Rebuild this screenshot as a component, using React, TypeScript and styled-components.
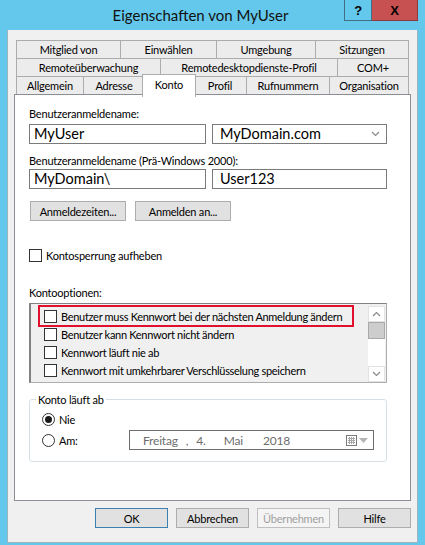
import { createGlobalStyle, styled } from 'styled-components';

const GlobalStyle = createGlobalStyle`
  html, body {
    margin: 0;
    padding: 0;
    background: #ffffff;
  }
  body {
    font-family: Lato, 'Liberation Sans', sans-serif;
    font-size: 11px;
    letter-spacing: -0.2px;
    color: #000000;
  }
`;

/* Fensterrahmen */
const Window = styled.div`
  width: 425px;
  height: 545px;
  box-sizing: border-box;
  padding: 0 7px 2px 7px;
  background: #63c8ec;
  display: flex;
  flex-direction: column;
`;

const TitleBar = styled.div`
  height: 30px;
  display: flex;
  align-items: flex-start;
  flex-shrink: 0;
`;

const Title = styled.div`
  flex: 1;
  padding-left: 50px;
  text-align: center;
  line-height: 30px;
  font-size: 15px;
  letter-spacing: 0;
  color: #111;
`;

const CaptionButton = styled.div<{ $close?: boolean }>`
  width: ${(p) => (p.$close ? '46px' : '28px')};
  height: 21px;
  box-sizing: border-box;
  display: flex;
  align-items: center;
  justify-content: center;
  font-family: 'Liberation Sans', sans-serif;
  font-weight: bold;
  font-size: 13px;
  background: ${(p) => (p.$close ? '#c75050' : 'transparent')};
  border: 1px solid ${(p) => (p.$close ? '#8f3a3a' : '#3f6f82')};
  border-top: none;
  border-left: ${(p) => (p.$close ? 'none' : '1px solid #3f6f82')};
`;

const Client = styled.div`
  flex: 1;
  background: #f0f0f0;
  border: 1px solid #9fb3bf;
  border-top: none;
  padding: 10px 6px 0 6px;
  display: flex;
  flex-direction: column;
`;

/* Registerkarten */
const TabStrip = styled.div`
  margin: 0 2px;
  display: flex;
  flex-direction: column;
`;

const TabRow = styled.div`
  display: flex;
  align-items: flex-end;
  height: 19px;

  & + & {
    margin-top: -1px;
  }
`;

const Tab = styled.div<{ $w: number; $active?: boolean }>`
  flex-shrink: 0;
  width: ${(p) => p.$w}px;
  height: ${(p) => (p.$active ? 23 : 19)}px;
  box-sizing: border-box;
  border: 1px solid #acacac;
  background: ${(p) => (p.$active ? '#ffffff' : '#ececec')};
  display: flex;
  align-items: ${(p) => (p.$active ? 'flex-start' : 'center')};
  justify-content: center;
  padding-top: ${(p) => (p.$active ? '2px' : '0')};
  line-height: 15px;
  white-space: nowrap;
  position: relative;

  & + & {
    margin-left: -1px;
  }

  ${(p) =>
    p.$active &&
    `
    z-index: 2;
    margin-left: -3px !important;
    margin-right: -2px;
    margin-bottom: -2px;
    border-bottom: none;
  `}
`;

const Panel = styled.div`
  margin-top: -1px;
  height: 407px;
  box-sizing: border-box;
  background: #ffffff;
  border: 1px solid #8b8e95;
  padding: 0 23px 0 14px;
  display: flex;
  flex-direction: column;
  position: relative;
  z-index: 1;
`;

const Label = styled.div<{ $gap: number }>`
  margin-top: ${(p) => p.$gap}px;
  line-height: 15px;
`;

const FieldRow = styled.div<{ $gap: number }>`
  margin-top: ${(p) => p.$gap}px;
  display: flex;
  gap: 6px;
`;

const TextBox = styled.div<{ $w: number; $pad?: number }>`
  width: ${(p) => p.$w}px;
  height: 20px;
  box-sizing: border-box;
  border: 1px solid #7a7a7a;
  background: #ffffff;
  padding-left: ${(p) => p.$pad ?? 4}px;
  font-size: 14.5px;
  letter-spacing: 0;
  line-height: 18px;
  display: flex;
  align-items: center;
  justify-content: space-between;
  padding-right: 6px;
`;

const ButtonRow = styled.div<{ $gap: number }>`
  margin-top: ${(p) => p.$gap}px;
  display: flex;
  gap: 9px;
  padding-left: 1px;
`;

const Button = styled.div<{ $w: number; $default?: boolean; $disabled?: boolean }>`
  width: ${(p) => p.$w}px;
  height: 20px;
  box-sizing: border-box;
  border: 1px solid
    ${(p) => (p.$default ? '#3c7fb1' : p.$disabled ? '#bfbfbf' : '#adadad')};
  background: ${(p) => (p.$disabled ? '#f4f4f4' : '#e1e1e1')};
  color: ${(p) => (p.$disabled ? '#a0a0a0' : '#000000')};
  display: flex;
  align-items: center;
  justify-content: center;
  line-height: 15px;
`;

const CheckRow = styled.div<{ $gap?: number }>`
  margin-top: ${(p) => p.$gap ?? 0}px;
  display: flex;
  align-items: center;
  gap: 4px;
  line-height: 15px;
  white-space: nowrap;
`;

const Box = styled.span`
  width: 13px;
  height: 13px;
  box-sizing: border-box;
  border: 1px solid #333333;
  background: #ffffff;
  flex-shrink: 0;
`;

/* Liste mit Kontooptionen */
const ListBox = styled.div`
  margin-top: 3px;
  height: 80px;
  box-sizing: border-box;
  border: 1px solid #adadad;
  border-left: 2px solid #828282;
  border-top-color: #828282;
  background: #f0f0f0;
  display: flex;
`;

const ListItems = styled.div`
  flex: 1;
  padding: 3px 0 0 9px;
  display: flex;
  flex-direction: column;
`;

const ListItem = styled.div<{ $marked?: boolean }>`
  width: 312px;
  height: 18px;
  box-sizing: border-box;
  padding-left: 4px;
  display: flex;
  align-items: center;
  gap: 4px;
  white-space: nowrap;
  letter-spacing: -0.3px;
  outline: ${(p) => (p.$marked ? '2px solid #e0102e' : 'none')};
`;

const ScrollBar = styled.div`
  width: 17px;
  margin: 2px 1px 0 0;
  height: 76px;
  background: #ffffff;
  display: flex;
  flex-direction: column;
`;

const ScrollArrow = styled.div`
  height: 16px;
  box-sizing: border-box;
  border: 1px solid #e3e3e3;
  display: flex;
  align-items: center;
  justify-content: center;
`;

const Thumb = styled.div`
  height: 17px;
  box-sizing: border-box;
  background: #cdcdcd;
  border: 1px solid #a9a9a9;
`;

const Track = styled.div`
  flex: 1;
`;

/* Gruppe Konto läuft ab */
const Group = styled.fieldset`
  margin: 9px 0 0 0;
  padding: 0 6px 11px 6px;
  border: 1px solid #d5dfe5;
  border-radius: 3px;
  min-width: 0;
`;

const Legend = styled.legend`
  padding: 0 2px;
  line-height: 15px;
`;

const RadioRow = styled.div<{ $gap: number; $h: number }>`
  margin-top: ${(p) => p.$gap}px;
  height: ${(p) => p.$h}px;
  display: flex;
  align-items: center;
  padding-left: 6px;
`;

const RadioLabel = styled.label`
  display: flex;
  align-items: center;
  gap: 4px;
  line-height: 15px;
`;

const Radio = styled.span<{ $on?: boolean }>`
  width: 13px;
  height: 13px;
  box-sizing: border-box;
  border-radius: 50%;
  border: 1px solid #333333;
  background: #ffffff;
  display: flex;
  align-items: center;
  justify-content: center;

  &::after {
    content: '';
    width: 7px;
    height: 7px;
    border-radius: 50%;
    background: ${(p) => (p.$on ? '#1a1a1a' : 'transparent')};
  }
`;

const DatePicker = styled.div`
  margin: 0 6px 0 auto;
  width: 245px;
  height: 20px;
  box-sizing: border-box;
  border: 1px solid #6e6e6e;
  background: #ffffff;
  color: #6d6d6d;
  display: flex;
  align-items: center;
  padding: 0 5px 0 13px;
  font-size: 12px;
`;

const DatePart = styled.span<{ $gap: number }>`
  margin-left: ${(p) => p.$gap}px;
`;

const DateIcon = styled.span`
  margin-left: auto;
  display: flex;
  align-items: center;
  gap: 2px;
`;

const Footer = styled.div`
  margin-top: 7px;
  display: flex;
  justify-content: flex-end;
  gap: 8px;
`;

const Chevron = ({ up }: { up?: boolean }) => (
  <svg width='9' height='6' viewBox='0 0 9 6'>
    <polyline
      points={up ? '1,5 4.5,1.5 8,5' : '1,1 4.5,4.5 8,1'}
      fill='none'
      stroke='#8a8a8a'
      strokeWidth='1.2'
    />
  </svg>
);

const tabRows = [
  [
    { label: 'Mitglied von', w: 105 },
    { label: 'Einwählen', w: 97 },
    { label: 'Umgebung', w: 100 },
    { label: 'Sitzungen', w: 94 },
  ],
  [
    { label: 'Remoteüberwachung', w: 145 },
    { label: 'Remotedesktopdienste-Profil', w: 178 },
    { label: 'COM+', w: 72 },
  ],
  [
    { label: 'Allgemein', w: 68 },
    { label: 'Adresse', w: 62 },
    { label: 'Konto', w: 54, active: true },
    { label: 'Profil', w: 54 },
    { label: 'Rufnummern', w: 84 },
    { label: 'Organisation', w: 80 },
  ],
];

const options = [
  'Benutzer muss Kennwort bei der nächsten Anmeldung ändern',
  'Benutzer kann Kennwort nicht ändern',
  'Kennwort läuft nie ab',
  'Kennwort mit umkehrbarer Verschlüsselung speichern',
];

export default function App() {
  return (
    <>
      <GlobalStyle />
      <Window>
        <TitleBar>
          <Title>Eigenschaften von MyUser</Title>
          <CaptionButton>?</CaptionButton>
          <CaptionButton $close>X</CaptionButton>
        </TitleBar>
        <Client>
          <TabStrip>
            {tabRows.map((row, i) => (
              <TabRow key={i}>
                {row.map((t) => (
                  <Tab key={t.label} $w={t.w} $active={'active' in t}>
                    {t.label}
                  </Tab>
                ))}
              </TabRow>
            ))}
          </TabStrip>
          <Panel>
            <Label $gap={11}>Benutzeranmeldename:</Label>
            <FieldRow $gap={3}>
              <TextBox $w={177}>MyUser</TextBox>
              <TextBox $w={175} $pad={7}>
                MyDomain.com
                <Chevron />
              </TextBox>
            </FieldRow>
            <Label $gap={9}>Benutzeranmeldename (Prä-Windows 2000):</Label>
            <FieldRow $gap={1}>
              <TextBox $w={177}>MyDomain\</TextBox>
              <TextBox $w={175} $pad={7}>
                User123
              </TextBox>
            </FieldRow>
            <ButtonRow $gap={12}>
              <Button $w={96}>Anmeldezeiten...</Button>
              <Button $w={96}>Anmelden an...</Button>
            </ButtonRow>
            <CheckRow $gap={27}>
              <Box />
              Kontosperrung aufheben
            </CheckRow>
            <Label $gap={22}>Kontooptionen:</Label>
            <ListBox>
              <ListItems>
                {options.map((o, i) => (
                  <ListItem key={o} $marked={i === 0}>
                    <Box />
                    {o}
                  </ListItem>
                ))}
              </ListItems>
              <ScrollBar>
                <ScrollArrow>
                  <Chevron up />
                </ScrollArrow>
                <Thumb />
                <Track />
                <ScrollArrow>
                  <Chevron />
                </ScrollArrow>
              </ScrollBar>
            </ListBox>
            <Group>
              <Legend>Konto läuft ab</Legend>
              <RadioRow $gap={4} $h={16}>
                <RadioLabel>
                  <Radio $on />
                  Nie
                </RadioLabel>
              </RadioRow>
              <RadioRow $gap={3} $h={20}>
                <RadioLabel>
                  <Radio />
                  Am:
                </RadioLabel>
                <DatePicker>
                  <span>Freitag</span>
                  <DatePart $gap={8}>,</DatePart>
                  <DatePart $gap={8}>4.</DatePart>
                  <DatePart $gap={18}>Mai</DatePart>
                  <DatePart $gap={20}>2018</DatePart>
                  <DateIcon>
                    <svg width='11' height='11' viewBox='0 0 11 11'>
                      <rect x='0.5' y='0.5' width='10' height='10' fill='#ffffff' stroke='#7a7a7a' />
                      <path
                        d='M2 3.5h7M2 5.5h7M2 7.5h7M3.5 2v7M5.5 2v7M7.5 2v7'
                        stroke='#a8a8a8'
                        strokeWidth='1'
                      />
                    </svg>
                    <svg width='9' height='5' viewBox='0 0 9 5'>
                      <polygon points='0,0 9,0 4.5,5' fill='#b5b5b5' />
                    </svg>
                  </DateIcon>
                </DatePicker>
              </RadioRow>
            </Group>
          </Panel>
          <Footer>
            <Button $w={73} $default>
              OK
            </Button>
            <Button $w={73}>Abbrechen</Button>
            <Button $w={73} $disabled>
              Übernehmen
            </Button>
            <Button $w={73}>Hilfe</Button>
          </Footer>
        </Client>
      </Window>
    </>
  );
}
